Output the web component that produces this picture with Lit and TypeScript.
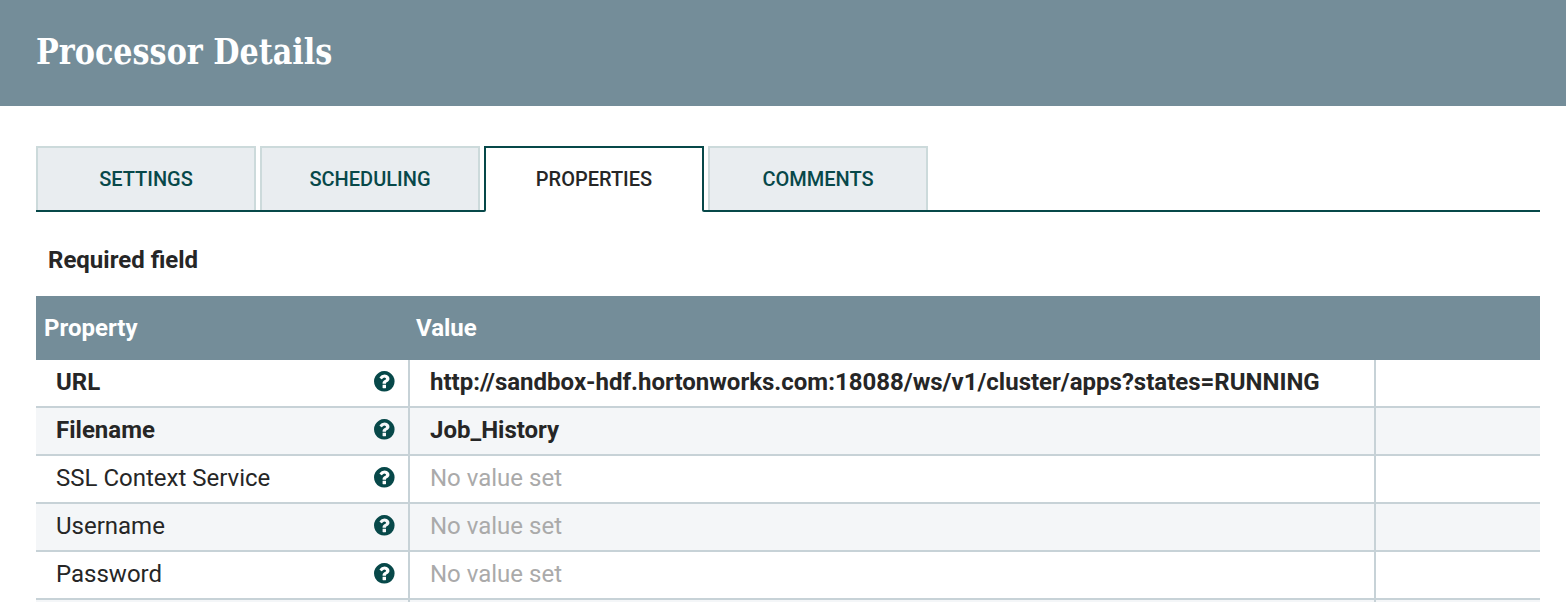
import { LitElement, html, css } from "lit";
import { customElement } from "lit/decorators.js";
import { classMap } from "lit/directives/class-map.js";

interface Row {
  name: string;
  value?: string;
  required?: boolean;
}

const TABS = ["SETTINGS", "SCHEDULING", "PROPERTIES", "COMMENTS"];
const ACTIVE = "PROPERTIES";

const ROWS: Row[] = [
  {
    name: "URL",
    value: "http://sandbox-hdf.hortonworks.com:18088/ws/v1/cluster/apps?states=RUNNING",
    required: true,
  },
  { name: "Filename", value: "Job_History", required: true },
  { name: "SSL Context Service" },
  { name: "Username" },
  { name: "Password" },
];

@customElement("help-icon")
export class HelpIcon extends LitElement {
  static styles = css`
    :host {
      display: block;
      width: 20.6px;
      height: 20.6px;
      color: #074849;
    }
    svg {
      display: block;
      width: 100%;
      height: 100%;
      overflow: visible;
    }
  `;
  render() {
    return html`<svg viewBox="0 0 1536 1536" fill="currentColor">
      <path
        transform="matrix(1 0 0 -1 0 1408)"
        d="M896 160v192q0 14 -9 23t-23 9h-192q-14 0 -23 -9t-9 -23v-192q0 -14 9 -23t23 -9h192q14 0 23 9t9 23zM1152 832q0 88 -55.5 163t-138.5 116t-170 41q-243 0 -371 -213q-15 -24 8 -42l132 -100q7 -6 19 -6q16 0 25 12q53 68 86 92q34 24 86 24q48 0 85.5 -26t37.5 -59q0 -38 -20 -61t-68 -45q-63 -28 -115.5 -86.5t-52.5 -125.5v-36q0 -14 9 -23t23 -9h192q14 0 23 9t9 23q0 19 21.5 49.5t54.5 49.5q32 18 49 28.5t46 35t44.5 48t28 60.5t12.5 81zM1536 640q0 -209 -103 -385.5t-279.5 -279.5t-385.5 -103t-385.5 103t-279.5 279.5t-103 385.5t103 385.5t279.5 279.5t385.5 103t385.5 -103t279.5 -279.5t103 -385.5z"
      />
    </svg>`;
  }
}

@customElement("app-root")
export class AppRoot extends LitElement {
  static styles = css`
    :host {
      display: block;
      height: 602px;
      overflow: hidden;
      background: #fff;
      color: #262626;
      font-family: Roboto, sans-serif;
      font-size: 24px;
    }
    * {
      box-sizing: border-box;
    }
    .header {
      height: 106px;
      padding: 29px 36px 0;
      background: #748d99;
    }
    .title {
      display: inline-block;
      margin: 0;
      font: bold 35px/46px "DejaVu Serif", serif;
      font-stretch: condensed;
      color: #fff;
      white-space: nowrap;
      transform-origin: 0 50%;
      transform: scaleX(0.961);
    }
    .body {
      padding: 40px 26px 0 36px;
    }
    .tabs {
      display: flex;
      height: 66px;
    }
    .tab {
      width: 220px;
      height: 64px;
      border: 2px solid #ccdadb;
      border-bottom: 0;
      background: #e9edf0;
      color: #074849;
      font-size: 20px;
      font-weight: 500;
      line-height: 62px;
      text-align: center;
    }
    .cell {
      width: 224px;
      border-bottom: 2px solid #074849;
    }
    .cell.before {
      width: 226px;
      margin-right: -2px;
      border-bottom-right-radius: 2px;
    }
    .cell.after {
      width: 226px;
      margin-left: -2px;
      padding-left: 6px;
      border-bottom-left-radius: 2px;
    }
    .cell.active {
      width: 220px;
      height: 64px;
      border: 2px solid #074849;
      border-bottom: 0;
    }
    .cell.active .tab {
      width: 216px;
      height: 62px;
      border: 0;
      background: #fff;
      color: #262626;
    }
    .rest {
      flex: 1;
      border-bottom: 2px solid #074849;
    }
    .label {
      padding: 34px 0 22px 12px;
      line-height: 28px;
      font-weight: bold;
    }
    .row,
    .head {
      display: grid;
      grid-template-columns: 374px 966px 1fr;
    }
    .head {
      height: 64px;
      background: #748d99;
      color: #fff;
      font-weight: bold;
      line-height: 64px;
    }
    .head div {
      padding-left: 8px;
    }
    .head div + div {
      padding-left: 6px;
    }
    .row {
      height: 48px;
      line-height: 44px;
      background: #fff;
      white-space: nowrap;
    }
    .row.odd {
      background: #f4f6f8;
    }
    .row > div {
      border-bottom: 2px solid #c7d2d7;
    }
    .name,
    .value {
      border-right: 2px solid #c7d2d7;
    }
    .name {
      display: flex;
      justify-content: space-between;
      padding: 0 13px 0 20px;
    }
    help-icon {
      margin-top: 11px;
    }
    .value {
      padding-left: 20px;
    }
    .unset {
      color: #aaa;
    }
    .required {
      font-weight: bold;
    }
  `;

  render() {
    const active = TABS.indexOf(ACTIVE);
    return html`
      <div class="header"><h1 class="title">Processor Details</h1></div>
      <div class="body">
        <div class="tabs">
          ${TABS.map(
            (t, i) => html`<div
              class=${classMap({
                cell: true,
                active: i === active,
                before: i === active - 1,
                after: i === active + 1,
              })}
            >
              <div class="tab">${t}</div>
            </div>`
          )}
          <div class="rest"></div>
        </div>
        <div class="label">Required field</div>
        <div class="head">
          <div>Property</div>
          <div>Value</div>
          <div></div>
        </div>
        ${ROWS.map(
          (r, i) => html`<div
            class=${classMap({ row: true, odd: i % 2 === 1, required: !!r.required })}
          >
            <div class="name"><span>${r.name}</span><help-icon></help-icon></div>
            <div class=${classMap({ value: true, unset: !r.value })}>
              ${r.value ?? "No value set"}
            </div>
            <div></div>
          </div>`
        )}
        <div class="row odd">
          <div class="name"></div>
          <div class="value"></div>
          <div></div>
        </div>
      </div>
    `;
  }
}
